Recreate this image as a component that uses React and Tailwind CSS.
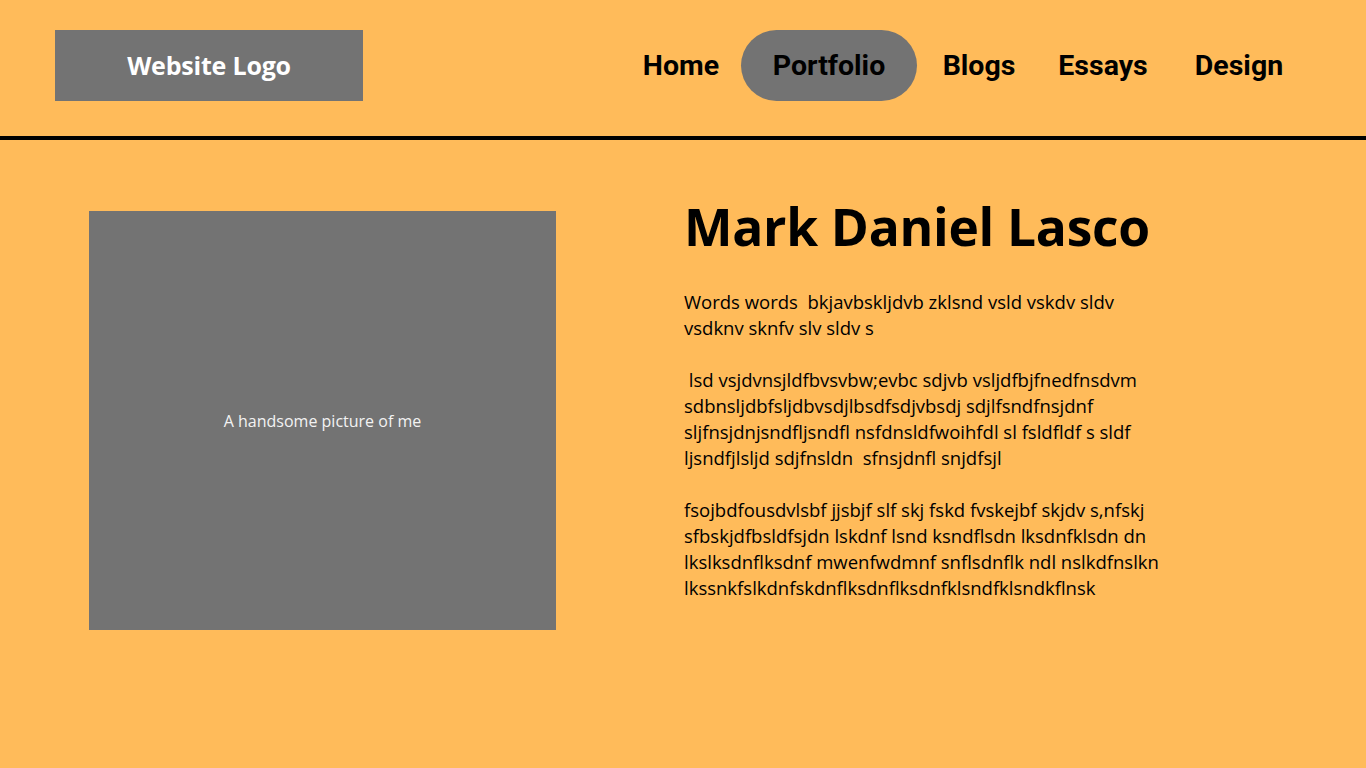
import React from "react";

const navItems = [
  { label: "Home", w: "w-[120px]" },
  { label: "Portfolio", w: "w-[176px]", active: true },
  { label: "Blogs", w: "w-[124px]" },
  { label: "Essays", w: "w-[124px]" },
  { label: "Design", w: "w-[148px]" },
];

const bodyLines = [
  "Words words\u00a0 bkjavbskljdvb zklsnd vsld vskdv sldv",
  "vsdknv sknfv slv sldv s",
  "",
  "\u00a0lsd vsjdvnsjldfbvsvbw;evbc sdjvb vsljdfbjfnedfnsdvm",
  "sdbnsljdbfsljdbvsdjlbsdfsdjvbsdj sdjlfsndfnsjdnf",
  "sljfnsjdnjsndfljsndfl nsfdnsldfwoihfdl sl fsldfldf s sldf",
  "ljsndfjlsljd sdjfnsldn\u00a0 sfnsjdnfl snjdfsjl",
  "",
  "fsojbdfousdvlsbf jjsbjf slf skj fskd fvskejbf skjdv s,nfskj",
  "sfbskjdfbsldfsjdn lskdnf lsnd ksndflsdn lksdnfklsdn dn",
  "lkslksdnflksdnf mwenfwdmnf snflsdnflk ndl nslkdfnslkn",
  "lkssnkfslkdnfskdnflksdnflksdnfklsndfklsndkflnsk",
];

const App = () => {
  return (
    <div className="min-h-screen w-full bg-[#ffbb5a] text-black" style={{ fontFamily: '"Open Sans", sans-serif' }}>
      {/* header */}
      <header className="h-[136px] flex justify-between items-start pl-[55px] pr-[53px]">
        <div className="mt-[30px] w-[308px] h-[71px] bg-[#737373] flex items-center justify-center">
          <span className="text-white font-bold text-[25px] tracking-[-0.2px]">Website Logo</span>
        </div>
        <nav className="mt-[30px] flex items-center h-[71px]" style={{ fontFamily: '"Roboto", sans-serif' }}>
          {navItems.map((item) => (
            <a
              key={item.label}
              href="#"
              className={`${item.w} h-[71px] pt-[2px] flex items-center justify-center font-bold text-[28.5px] ${
                item.active ? "bg-[#737373] rounded-full" : ""
              }`}
            >
              {item.label}
            </a>
          ))}
        </nav>
      </header>
      <div className="h-[4px] bg-black" />

      {/* main */}
      <main className="flex items-start pt-[56px]">
        <div className="mt-[15px] ml-[89px] w-[467px] h-[419px] bg-[#737373] flex items-center justify-center">
          <span className="text-[#f2f2f2] text-[16px]">A handsome picture of me</span>
        </div>
        <div className="ml-[128px]">
          <h1 className="font-bold text-[51.5px] leading-[60px] tracking-[-0.3px]">Mark Daniel Lasco</h1>
          <div className="mt-[33px] text-[18.5px] leading-[26px]">
            {bodyLines.map((line, i) => (
              <p key={i} className="h-[26px] whitespace-nowrap">
                {line}
              </p>
            ))}
          </div>
        </div>
      </main>
    </div>
  );
};

export default App;
